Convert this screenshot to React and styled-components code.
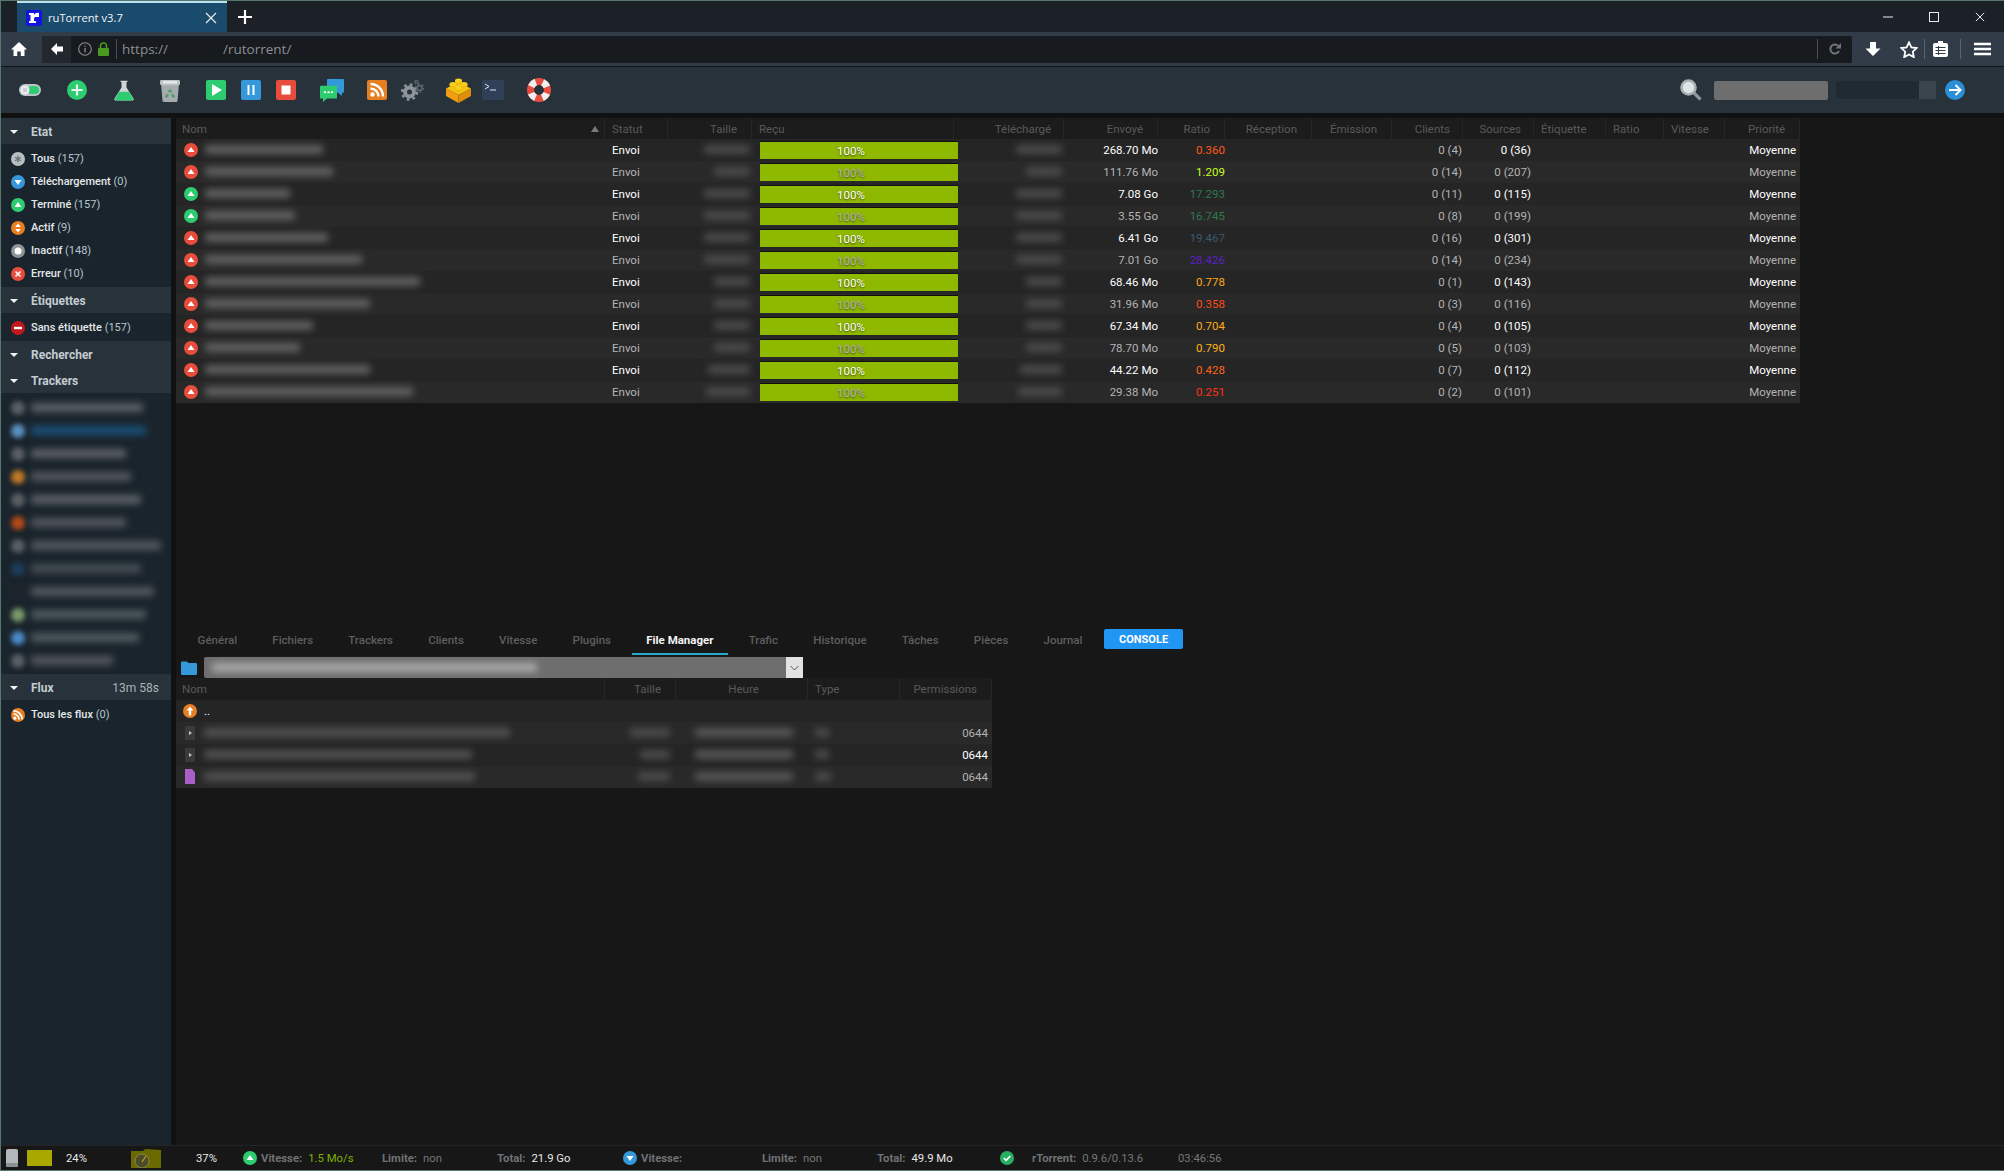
import styled, { createGlobalStyle } from "styled-components";

const GlobalStyle = createGlobalStyle`
  html, body { margin: 0; padding: 0; background: #171717; }
  * { box-sizing: border-box; }
`;

const Window = styled.div`
  width: 2004px;
  height: 1171px;
  overflow: hidden;
  display: flex;
  flex-direction: column;
  border: 1px solid #56786c;
  border-right: 0;
  background: #171717;
  font-family: Roboto, "Liberation Sans", sans-serif;
`;

/* browser chrome */
const TabBar = styled.div`
  height: 31px;
  flex: none;
  display: flex;
  align-items: stretch;
  padding-left: 16px;
  background: #1b2127;
`;

const BrowserTab = styled.div`
  width: 210px;
  display: flex;
  align-items: center;
  padding: 0 10px 0 9px;
  background: #1a4a6c;
  border-top: 2px solid #b9e3ee;
  color: #f2f5f7;
  font: 11.2px "Open Sans", "Liberation Sans", sans-serif;
`;

const TabTitle = styled.span`
  margin-left: 6px;
  flex: 1;
`;

const NewTab = styled.div`
  display: flex;
  align-items: center;
  margin-left: 11px;
`;

const WindowButtons = styled.div`
  margin-left: auto;
  display: flex;
  align-items: center;
  padding-right: 19px;
  gap: 36px;
`;

const NavBar = styled.div`
  height: 35px;
  flex: none;
  display: flex;
  align-items: center;
  padding-left: 10px;
  background: #323c48;
  border-bottom: 1px solid #12161a;
`;

const UrlBox = styled.div`
  margin-left: 15px;
  width: 1810px;
  height: 27px;
  display: flex;
  align-items: center;
  background: #171a1e;
  border-radius: 2px;
  color: #8b8f93;
  font: 13.5px "Open Sans", "Liberation Sans", sans-serif;
`;

const BackButton = styled.div`
  width: 29px;
  height: 100%;
  display: flex;
  align-items: center;
  justify-content: center;
  background: #22282e;
`;

const UrlSeparator = styled.div`
  width: 1px;
  height: 20px;
  margin: ${(p) => p.$margin};
  background: ${(p) => p.$color || "#4a5058"};
`;

const UrlText = styled.span`
  margin-left: ${(p) => p.$left}px;
`;

const NavIcons = styled.div`
  display: flex;
  align-items: center;
  margin-left: 13px;
`;

const NavIcon = styled.span`
  display: flex;
  margin-left: ${(p) => p.$left || 0}px;
`;

/* ruTorrent toolbar */
const Toolbar = styled.div`
  height: 46px;
  flex: none;
  display: flex;
  align-items: center;
  padding-left: 18px;
  background: #27323a;
`;

const ToolIcon = styled.span`
  display: flex;
  margin-left: ${(p) => p.$left || 0}px;
`;

const SearchArea = styled.div`
  margin-left: auto;
  display: flex;
  align-items: center;
  padding-right: 39px;
`;

const SearchInput = styled.div`
  width: 114px;
  height: 19px;
  margin-left: 12px;
  background: #6e6e6e;
  border-radius: 2px;
`;

const SearchSelect = styled.div`
  width: 100px;
  height: 18px;
  margin: 0 9px 0 8px;
  display: flex;
  justify-content: flex-end;
  background: #202a32;
  border-radius: 2px;
`;

const SelectArrow = styled.div`
  width: 17px;
  background: #3b454d;
`;

/* page body */
const Body = styled.div`
  flex: 1;
  min-height: 0;
  display: flex;
  padding-top: 5px;
  background: #111;
`;

const Sidebar = styled.aside`
  width: 170px;
  flex: none;
  background: #1a242c;
`;

const PanelHeader = styled.div`
  height: 26px;
  display: flex;
  align-items: center;
  padding: 2px 12px 0 9px;
  background: #27323a;
  color: #c4ccd2;
  font-size: 12px;
  font-weight: 700;
`;

const Caret = styled.span`
  width: 0;
  height: 0;
  margin-right: 13px;
  border-left: 4px solid transparent;
  border-right: 4px solid transparent;
  border-top: 4px solid #f2f2f2;
`;

const HeaderExtra = styled.span`
  margin-left: auto;
  font-weight: 400;
  color: #aab2b8;
`;

const ItemList = styled.div`
  padding: 3px 0 2px;
`;

const SideItem = styled.div`
  height: 23px;
  display: flex;
  align-items: center;
  padding-left: 10px;
  gap: 6px;
  color: #e4e8ea;
  font-size: 11px;
  font-weight: 500;
`;

const Count = styled.span`
  color: #b4c4cf;
  font-weight: 400;
`;

const Blur = styled.span`
  display: inline-block;
  flex: none;
  width: ${(p) => p.$w}px;
  height: ${(p) => p.$h || 9}px;
  background: ${(p) => p.$color || "#606060"};
  border-radius: 2px;
  filter: blur(${(p) => p.$blur || 3.5}px);
`;

const BlurDot = styled(Blur)`
  height: 14px;
  border-radius: 50%;
`;

const Main = styled.main`
  flex: 1;
  min-width: 0;
  margin-left: 5px;
  display: flex;
  flex-direction: column;
  background: #171717;
`;

const TopPane = styled.div`
  height: 507px;
  flex: none;
`;

const TableRow = styled.div`
  display: grid;
  grid-template-columns: ${(p) => p.$cols};
  width: ${(p) => p.$width}px;
  height: ${(p) => p.$h || 22}px;
  background: ${(p) => (p.$odd ? "#252525" : "#292929")};
  color: ${(p) => (p.$odd ? "#fff" : "#b4b4b4")};
  font-size: 11.5px;
`;

const HeadRow = styled(TableRow)`
  background: #1c1c1c;
  color: #5a5a5a;
`;

const Cell = styled.div`
  display: flex;
  align-items: center;
  min-width: 0;
  white-space: nowrap;
  justify-content: ${(p) => (p.$align === "right" ? "flex-end" : p.$align === "center" ? "center" : "flex-start")};
  padding: 0 ${(p) => p.$pr ?? 3}px 1px ${(p) => p.$pl ?? 7}px;
  color: ${(p) => p.$color || "inherit"};
`;

const HeadCell = styled(Cell)`
  position: relative;
  padding-bottom: 0;
  border-right: 1px solid #262626;
`;

const SortMark = styled.span`
  position: absolute;
  right: 5px;
  top: 8px;
  border-left: 4px solid transparent;
  border-right: 4px solid transparent;
  border-bottom: 6px solid #7a7a7a;
`;

const ProgressBar = styled.div`
  flex: none;
  width: 198px;
  height: 18px;
  margin-top: 1px;
  display: flex;
  align-items: center;
  justify-content: center;
  padding-right: 16px;
  background: #8fb800;
  border-top: 1px solid #10120a;
  text-shadow: 0 1px 2px #3a4a00;
`;

const Tabs = styled.div`
  height: 30px;
  display: flex;
  padding-left: 7px;
  gap: 6px;
`;

const PanelTab = styled.div`
  padding: 1px 14.6px 0;
  display: flex;
  align-items: center;
  color: ${(p) => (p.$active ? "#f4f4f4" : "#5e5e5e")};
  font-size: 11.5px;
  font-weight: ${(p) => (p.$active ? 700 : 500)};
  border-bottom: 2px solid ${(p) => (p.$active ? "#2aa8c8" : "transparent")};
`;

const ConsoleTab = styled.div`
  width: 79px;
  height: 20px;
  margin: 4px 0 0 1px;
  display: flex;
  align-items: center;
  justify-content: center;
  background: #2196f3;
  border-radius: 2px;
  color: #fff;
  font-size: 11px;
  font-weight: 700;
`;

const PathRow = styled.div`
  height: 21px;
  margin-top: 2px;
  display: flex;
  align-items: center;
  padding-left: 5px;
`;

const PathSelect = styled.div`
  width: 599px;
  height: 21px;
  margin-left: 7px;
  display: flex;
  align-items: center;
  justify-content: space-between;
  padding-left: 8px;
  background: #6e6e6e;
  border-radius: 2px 0 0 2px;
`;

const PathArrow = styled.div`
  width: 17px;
  height: 100%;
  display: flex;
  align-items: center;
  justify-content: center;
  background: #e2e2e2;
`;

const FileName = styled.span`
  margin-left: 7px;
`;

const StatusBar = styled.footer`
  height: 25px;
  flex: none;
  display: flex;
  align-items: center;
  background: #171717;
  border-top: 1px solid #242424;
  color: #6e7275;
  font-size: 11.3px;
`;

const StatusSlot = styled.div`
  display: flex;
  align-items: center;
  flex: none;
  width: ${(p) => p.$w}px;
  padding-left: ${(p) => p.$pl || 0}px;
`;

const StatusLabel = styled.span`
  font-weight: 700;
  margin: 0 6px 0 ${(p) => p.$left || 0}px;
`;

const StatusValue = styled.span`
  color: ${(p) => p.$color || "#74787b"};
`;

const LoadBox = styled.div`
  width: 25px;
  height: 16px;
  margin-left: 9px;
  background: #a8a800;
`;

/* drawings */
const Dot = ({ color, children, size = 14 }) => (
  <svg width={size} height={size} viewBox="0 0 14 14" style={{ flex: "none" }}>
    <circle cx="7" cy="7" r="7" fill={color} />
    {children}
  </svg>
);
const Up = () => <path d="M7 4 L10.5 9 H3.5 Z" fill="#fff" />;
const Down = () => <path d="M7 10 L3.5 5 H10.5 Z" fill="#fff" />;

const Favicon = () => (
  <svg width="16" height="16" viewBox="0 0 16 16">
    <rect width="16" height="16" rx="2" fill="#1414e0" />
    <path d="M3 3h5v2c1-2 3-2.500 5-2v4h-3c-1 0-2 .5-2 2v2h2v2H3v-2h1.500V5H3z" fill="#fff" />
  </svg>
);
const CloseX = ({ size = 12, color = "#e8ecef" }) => (
  <svg width={size} height={size} viewBox="0 0 12 12">
    <path d="M1 1 L11 11 M11 1 L1 11" stroke={color} strokeWidth="1.200" />
  </svg>
);
const PlusIcon = () => (
  <svg width="14" height="14" viewBox="0 0 14 14">
    <path d="M7 0v14M0 7h14" stroke="#fff" strokeWidth="2.200" />
  </svg>
);
const HomeIcon = () => (
  <svg width="16" height="16" viewBox="0 0 16 16">
    <path d="M8 1 L16 8.500 H13.500 V15 H9.800 V10.500 H6.200 V15 H2.500 V8.500 H0 Z" fill="#fff" />
  </svg>
);
const BackIcon = () => (
  <svg width="14" height="14" viewBox="0 0 14 14">
    <path d="M7 1 L1 7 L7 13 V9.500 H13 V4.500 H7 Z" fill="#fff" />
  </svg>
);
const InfoIcon = () => (
  <svg width="14" height="14" viewBox="0 0 14 14">
    <circle cx="7" cy="7" r="6.300" fill="none" stroke="#8b8f93" strokeWidth="1.100" />
    <path d="M7 6v4.500M7 3.500v1.300" stroke="#8b8f93" strokeWidth="1.300" />
  </svg>
);
const LockIcon = () => (
  <svg width="11" height="14" viewBox="0 0 11 14">
    <path d="M2.500 6V4a3 3 0 0 1 6 0v2" fill="none" stroke="#4a9a20" strokeWidth="1.600" />
    <rect y="6" width="11" height="8" rx="1" fill="#4a9a20" />
  </svg>
);
const ReloadIcon = () => (
  <svg width="14" height="14" viewBox="0 0 14 14">
    <path d="M11 9a4.500 4.500 0 1 1-.8-5" fill="none" stroke="#6f757b" strokeWidth="2" />
    <path d="M13 1v5.500H7.500z" fill="#6f757b" />
  </svg>
);
const DownloadIcon = () => (
  <svg width="16" height="16" viewBox="0 0 16 16">
    <path d="M5 1h6v6.500h4.500L8 15 .5 7.500H5z" fill="#fff" />
  </svg>
);
const StarIcon = () => (
  <svg width="18" height="17" viewBox="0 0 18 17">
    <path d="M9 1.300l2.400 5 5.400.7-4 3.700 1 5.400L9 13.500l-4.800 2.600 1-5.400-4-3.700 5.400-.7z" fill="none" stroke="#fff" strokeWidth="1.800" />
  </svg>
);
const ClipboardIcon = () => (
  <svg width="15" height="16" viewBox="0 0 15 16">
    <rect y="2" width="15" height="14" rx="2" fill="#fff" />
    <rect x="5" width="5" height="4" fill="#fff" />
    <path d="M2.500 6.500h10M2.500 9.500h10M2.500 12.500h10M5.500 5v9" stroke="#323c48" strokeWidth="1" />
  </svg>
);
const MenuIcon = () => (
  <svg width="17" height="14" viewBox="0 0 17 14">
    <path d="M0 2h17M0 7h17M0 12h17" stroke="#fff" strokeWidth="2.600" />
  </svg>
);
const SwitchIcon = () => (
  <svg width="22" height="12" viewBox="0 0 22 12">
    <rect width="22" height="12" rx="6" fill="#bcc3c7" />
    <rect x="9" y="2" width="11" height="8" rx="4" fill="#2ecc71" />
    <circle cx="6" cy="6" r="4.500" fill="#e8ecee" />
    <path d="M5 4v4M7 4v4" stroke="#9aa3a8" strokeWidth="0.800" />
  </svg>
);
const AddIcon = () => (
  <svg width="20" height="20" viewBox="0 0 20 20">
    <circle cx="10" cy="10" r="10" fill="#2ecc71" />
    <path d="M10 4.500v11M4.500 10h11" stroke="#ecf7ef" strokeWidth="2.200" />
  </svg>
);
const FlaskIcon = () => (
  <svg width="20" height="21" viewBox="0 0 20 25" preserveAspectRatio="none">
    <path d="M6.500 1h7v1.500h-1V9l7 13c.6 1.200-.2 2.500-1.500 2.500H2c-1.300 0-2.100-1.300-1.500-2.500l7-13V2.500h-1z" fill="#d0d5d8" />
    <path d="M5 14h10l4 8.500c0 1-.5 2-1.500 2h-15c-1 0-1.500-1-1.500-2z" fill="#2ecc71" />
  </svg>
);
const TrashIcon = () => (
  <svg width="20" height="23" viewBox="0 0 20 26" preserveAspectRatio="none">
    <path d="M1 5h18l-1.500 19.500a1.500 1.500 0 0 1-1.500 1.500H4a1.500 1.500 0 0 1-1.500-1.500z" fill="#a4acae" />
    <rect y="1" width="20" height="6" rx="1.500" fill="#bcc3c5" />
    <path d="M3 2.500h14v2.500H3z" fill="#e8ecee" />
    <path d="M10 11l2.500 4h-5zM6 17l3 .5-1.500 3.500H5zM14 17l-3 .5 1.500 3.500H15z" fill="#4c9c6c" />
  </svg>
);
const SquareBtn = ({ color, children }) => (
  <svg width="20" height="20" viewBox="0 0 20 20">
    <rect width="20" height="20" rx="2" fill={color} />
    {children}
  </svg>
);
const ChatIcon = () => (
  <svg width="24" height="23" viewBox="0 0 24 27" preserveAspectRatio="none">
    <path d="M7 1a1 1 0 0 1 1-1h15a1 1 0 0 1 1 1v14a1 1 0 0 1-1 1h-1v4l-4-4H8a1 1 0 0 1-1-1z" fill="#3498db" />
    <path d="M0 9a1 1 0 0 1 1-1h15a1 1 0 0 1 1 1v13a1 1 0 0 1-1 1H7l-4 4v-4H1a1 1 0 0 1-1-1z" fill="#2ecc71" />
    <circle cx="5" cy="15.500" r="1.200" fill="#fff" />
    <circle cx="8.500" cy="15.500" r="1.200" fill="#fff" />
    <circle cx="12" cy="15.500" r="1.200" fill="#fff" />
  </svg>
);
const RssIcon = ({ size = 20, round }) => (
  <svg width={size} height={size} viewBox="0 0 20 20" style={{ flex: "none" }}>
    <rect width="20" height="20" rx={round ? 10 : 2} fill="#e67e22" />
    <circle cx="5.500" cy="14.500" r="2.200" fill="#fff" />
    <path d="M3.500 8.500a8 8 0 0 1 8 8M3.500 4a12.500 12.500 0 0 1 12.500 12.500" fill="none" stroke="#fff" strokeWidth="2.400" />
  </svg>
);
const GearsIcon = () => (
  <svg width="24" height="22" viewBox="0 0 24 22">
    <circle cx="8.500" cy="13" r="4.500" fill="none" stroke="#8d9599" strokeWidth="4" />
    <circle cx="8.500" cy="13" r="7.500" fill="none" stroke="#8d9599" strokeWidth="2.500" strokeDasharray="2.700 3.190" />
    <circle cx="18.500" cy="9" r="2.500" fill="none" stroke="#5c6468" strokeWidth="1.800" />
    <circle cx="18.500" cy="9" r="4" fill="none" stroke="#5c6468" strokeWidth="1.400" strokeDasharray="1.800 2.390" />
    <circle cx="15.500" cy="3" r="1.600" fill="none" stroke="#5c6468" strokeWidth="1.500" />
  </svg>
);
const LegoIcon = () => (
  <svg width="25" height="25" viewBox="0 0 25 25">
    <path d="M12.500 4 L25 10.500 L12.500 17 L0 10.500 Z" fill="#f1c40f" />
    <path d="M0 10.500 L12.500 17 V25 L0 18 Z" fill="#f39c12" />
    <path d="M25 10.500 L12.500 17 V25 L25 18 Z" fill="#e08e0b" />
    <ellipse cx="12.500" cy="3.500" rx="3.500" ry="2.300" fill="#f5a800" />
    <ellipse cx="7" cy="7" rx="3.500" ry="2.300" fill="#f5a800" />
    <ellipse cx="18" cy="7" rx="3.500" ry="2.300" fill="#f5a800" />
    <ellipse cx="12.500" cy="10.500" rx="3.500" ry="2.300" fill="#f5a800" />
    <ellipse cx="12.500" cy="2.800" rx="3.500" ry="2.300" fill="#f5d020" />
    <ellipse cx="7" cy="6.300" rx="3.500" ry="2.300" fill="#f5d020" />
    <ellipse cx="18" cy="6.300" rx="3.500" ry="2.300" fill="#f5d020" />
    <ellipse cx="12.500" cy="9.800" rx="3.500" ry="2.300" fill="#f5d020" />
  </svg>
);
const TerminalIcon = () => (
  <svg width="22" height="20" viewBox="0 0 22 20">
    <rect width="22" height="20" rx="2" fill="#2f4058" />
    <path d="M3 4l4 2.500-4 2.500" fill="none" stroke="#dfe6ea" strokeWidth="1" />
    <path d="M8 10h6" stroke="#dfe6ea" strokeWidth="1" />
  </svg>
);
const BuoyIcon = () => (
  <svg width="24" height="24" viewBox="0 0 24 24">
    <circle cx="12" cy="12" r="8.500" fill="none" stroke="#e74c3c" strokeWidth="7" />
    <circle cx="12" cy="12" r="8.500" fill="none" stroke="#ecf0f1" strokeWidth="7" strokeDasharray="6.350 7" strokeDashoffset="-3.500" />
  </svg>
);
const SearchIcon = () => (
  <svg width="22" height="22" viewBox="0 0 22 22">
    <path d="M13 13l7.500 7.500" stroke="#8d9599" strokeWidth="3.200" />
    <circle cx="8.500" cy="8.500" r="7" fill="#dfe5e6" stroke="#a7afb1" strokeWidth="2.600" />
  </svg>
);
const GoIcon = () => (
  <svg width="20" height="20" viewBox="0 0 20 20">
    <circle cx="10" cy="10" r="10" fill="#2b8fd8" />
    <path d="M4 10h11M10.500 5l5 5-5 5" fill="none" stroke="#fff" strokeWidth="2" />
  </svg>
);
const FolderIcon = () => (
  <svg width="16" height="14" viewBox="0 0 16 14">
    <path d="M0 1.500A1 1 0 0 1 1 .5h5l1.500 1.500H15a1 1 0 0 1 1 1V13a1 1 0 0 1-1 1H1a1 1 0 0 1-1-1z" fill="#3498db" />
  </svg>
);
const ChevronIcon = ({ color = "#555" }) => (
  <svg width="9" height="6" viewBox="0 0 9 6">
    <path d="M.5 1l4 4 4-4" fill="none" stroke={color} strokeWidth="1" />
  </svg>
);
const ParentIcon = () => (
  <svg width="14" height="14" viewBox="0 0 14 14" style={{ flex: "none" }}>
    <circle cx="7" cy="7" r="7" fill="#e67e22" />
    <path d="M7 2.500L10.500 6.500H8.200V11.500H5.800V6.500H3.500z" fill="#fff" />
  </svg>
);
const VideoIcon = () => (
  <svg width="14" height="14" viewBox="0 0 14 14" style={{ flex: "none" }}>
    <rect x="2" width="10" height="14" fill="#3a3a3a" />
    <path d="M6 5l3 2-3 2z" fill="#c8c8c8" />
  </svg>
);
const FileIcon = () => (
  <svg width="14" height="15" viewBox="0 0 14 15" style={{ flex: "none" }}>
    <path d="M2 0h7l3 3.500V15H2z" fill="#a85fc8" />
  </svg>
);
const DiskIcon = () => (
  <svg width="12" height="18" viewBox="0 0 12 18">
    <rect width="12" height="18" rx="2" fill="#b4b8ba" />
    <rect y="14" width="12" height="4" rx="1" fill="#8b9092" />
  </svg>
);
const GaugeIcon = () => (
  <svg width="30" height="19" viewBox="0 0 30 19">
    <path d="M0 2h12l2-2 16 1v18H0z" fill="#6a6a00" />
    <circle cx="11" cy="12" r="7" fill="#4c4c28" stroke="#8a8a50" strokeWidth="1" />
    <path d="M11 13l4-6" stroke="#c8a020" strokeWidth="1.200" />
  </svg>
);

/* data */
const mainCols = "429px 63px 84px 202px 110px 94px 67px 87px 80px 71px 71px 72px 58px 61px 75px";
const mainHead = [
  ["Nom", "left", 6], ["Statut", "left", 7], ["Taille", "right"], ["Reçu", "left", 7], ["Téléchargé", "right"],
  ["Envoyé", "right"], ["Ratio", "right"], ["Réception", "right"], ["Émission", "right"], ["Clients", "right"],
  ["Sources", "right"], ["Étiquette", "left", 7], ["Ratio", "left", 7], ["Vitesse", "left", 7], ["Priorité", "right"],
];
const torrents = [
  { dot: "#e74c3c", name: 118, size: 46, dl: 46, sent: "268.70 Mo", ratio: "0.360", color: "#ff5a14", clients: "0 (4)", sources: "0 (36)" },
  { dot: "#e74c3c", name: 128, size: 36, dl: 36, sent: "111.76 Mo", ratio: "1.209", color: "#c8ff1e", clients: "0 (14)", sources: "0 (207)" },
  { dot: "#2ecc71", name: 85, size: 46, dl: 46, sent: "7.08 Go", ratio: "17.293", color: "#2f7a50", clients: "0 (11)", sources: "0 (115)" },
  { dot: "#2ecc71", name: 90, size: 46, dl: 46, sent: "3.55 Go", ratio: "16.745", color: "#2f7a50", clients: "0 (8)", sources: "0 (199)" },
  { dot: "#e74c3c", name: 123, size: 46, dl: 46, sent: "6.41 Go", ratio: "19.467", color: "#3a5a6e", clients: "0 (16)", sources: "0 (301)" },
  { dot: "#e74c3c", name: 157, size: 46, dl: 46, sent: "7.01 Go", ratio: "28.426", color: "#5a1fc8", clients: "0 (14)", sources: "0 (234)" },
  { dot: "#e74c3c", name: 215, size: 36, dl: 36, sent: "68.46 Mo", ratio: "0.778", color: "#ffaa14", clients: "0 (1)", sources: "0 (143)" },
  { dot: "#e74c3c", name: 165, size: 36, dl: 36, sent: "31.96 Mo", ratio: "0.358", color: "#ff4a14", clients: "0 (3)", sources: "0 (116)" },
  { dot: "#e74c3c", name: 108, size: 36, dl: 36, sent: "67.34 Mo", ratio: "0.704", color: "#ffaa14", clients: "0 (4)", sources: "0 (105)" },
  { dot: "#e74c3c", name: 95, size: 36, dl: 36, sent: "78.70 Mo", ratio: "0.790", color: "#ffb414", clients: "0 (5)", sources: "0 (103)" },
  { dot: "#e74c3c", name: 165, size: 42, dl: 42, sent: "44.22 Mo", ratio: "0.428", color: "#ff6414", clients: "0 (7)", sources: "0 (112)" },
  { dot: "#e74c3c", name: 208, size: 44, dl: 44, sent: "29.38 Mo", ratio: "0.251", color: "#ff3214", clients: "0 (2)", sources: "0 (101)" },
];
const states = [
  ["Tous", "(157)", "#b8bfc3", <path key="a" d="M7 3.500v7M4 5.200l6 3.600M10 5.200l-6 3.600" stroke="#6a7276" strokeWidth="1.300" />],
  ["Téléchargement", "(0)", "#3498db", <Down key="b" />],
  ["Terminé", "(157)", "#2ecc71", <Up key="c" />],
  ["Actif", "(9)", "#e67e22", <path key="d" d="M7 2.500l2.800 3.500H4.200zM7 11.500l2.800-3.500H4.200z" fill="#fff" />],
  ["Inactif", "(148)", "#8d9599", <circle key="e" cx="7" cy="7" r="3.500" fill="#fff" />],
  ["Erreur", "(10)", "#e74c3c", <path key="f" d="M4.500 4.500l5 5M9.500 4.500l-5 5" stroke="#fff" strokeWidth="1.600" />],
];
const trackers = [
  [112, "#5c6165", "#5a5f63"], [115, "#1a5078", "#5a90c0"], [95, "#5c6165", "#5a5f63"], [100, "#54595d", "#c07a28"],
  [110, "#5c6165", "#5a5f63"], [95, "#54595d", "#b04a18"], [130, "#54595d", "#5a5f63"], [110, "#464e54", "#1c3c58"],
  [123, "#54595d", "#1e262c"], [115, "#505a5e", "#7a9a6a"], [108, "#505a5e", "#4a8ac8"], [82, "#54595d", "#5a5f63"],
];
const panelTabs = ["Général", "Fichiers", "Trackers", "Clients", "Vitesse", "Plugins", "File Manager", "Trafic", "Historique", "Tâches", "Pièces", "Journal"];
const fileCols = "429px 71px 132px 92px 92px";
const files = [
  { icon: <VideoIcon />, name: 306, size: 40, time: 98, type: 14 },
  { icon: <VideoIcon />, name: 268, size: 30, time: 98, type: 14 },
  { icon: <FileIcon />, name: 271, size: 32, time: 98, type: 16 },
];

export default function App() {
  return (
    <>
      <GlobalStyle />
      <Window>
        <TabBar>
          <BrowserTab>
            <Favicon />
            <TabTitle>ruTorrent v3.7</TabTitle>
            <CloseX />
          </BrowserTab>
          <NewTab><PlusIcon /></NewTab>
          <WindowButtons>
            <svg width="10" height="10" viewBox="0 0 10 10"><path d="M0 5h10" stroke="#e8ecef" /></svg>
            <svg width="10" height="10" viewBox="0 0 10 10"><rect x=".5" y=".5" width="9" height="9" fill="none" stroke="#e8ecef" /></svg>
            <CloseX size={10} />
          </WindowButtons>
        </TabBar>

        <NavBar>
          <HomeIcon />
          <UrlBox>
            <BackButton><BackIcon /></BackButton>
            <NavIcon $left={7}><InfoIcon /></NavIcon>
            <NavIcon $left={6}><LockIcon /></NavIcon>
            <UrlSeparator $margin="0 5px 0 7px" />
            <UrlText>https://</UrlText>
            <UrlText $left={55}>/rutorrent/</UrlText>
            <UrlSeparator $margin="0 10px 0 auto" />
            <ReloadIcon />
            <NavIcon $left={10} />
          </UrlBox>
          <NavIcons>
            <DownloadIcon />
            <NavIcon $left={19}><StarIcon /></NavIcon>
            <UrlSeparator $margin="0 8px 0 6px" $color="#5a646e" />
            <ClipboardIcon />
            <UrlSeparator $margin="0 13px 0 12px" $color="#5a646e" />
            <MenuIcon />
          </NavIcons>
        </NavBar>

        <Toolbar>
          <ToolIcon><SwitchIcon /></ToolIcon>
          <ToolIcon $left={26}><AddIcon /></ToolIcon>
          <ToolIcon $left={27}><FlaskIcon /></ToolIcon>
          <ToolIcon $left={26}><TrashIcon /></ToolIcon>
          <ToolIcon $left={26}>
            <SquareBtn color="#2ecc71"><path d="M6 4l10 6-10 6z" fill="#fff" /></SquareBtn>
          </ToolIcon>
          <ToolIcon $left={15}>
            <SquareBtn color="#3498db"><path d="M7.500 5v10M12.500 5v10" stroke="#fff" strokeWidth="2" /></SquareBtn>
          </ToolIcon>
          <ToolIcon $left={15}>
            <SquareBtn color="#e74c3c"><rect x="5.500" y="5.500" width="9" height="9" fill="#fff" /></SquareBtn>
          </ToolIcon>
          <ToolIcon $left={24}><ChatIcon /></ToolIcon>
          <ToolIcon $left={23}><RssIcon /></ToolIcon>
          <ToolIcon $left={14}><GearsIcon /></ToolIcon>
          <ToolIcon $left={21}><LegoIcon /></ToolIcon>
          <ToolIcon $left={11}><TerminalIcon /></ToolIcon>
          <ToolIcon $left={23}><BuoyIcon /></ToolIcon>
          <SearchArea>
            <SearchIcon />
            <SearchInput />
            <SearchSelect><SelectArrow /></SearchSelect>
            <GoIcon />
          </SearchArea>
        </Toolbar>

        <Body>
          <Sidebar>
            <PanelHeader><Caret />Etat</PanelHeader>
            <ItemList>
              {states.map(([label, count, color, glyph]) => (
                <SideItem key={label}>
                  <Dot color={color}>{glyph}</Dot>
                  <span>{label} <Count>{count}</Count></span>
                </SideItem>
              ))}
            </ItemList>
            <PanelHeader><Caret />Étiquettes</PanelHeader>
            <ItemList>
              <SideItem>
                <Dot color="#c0181c"><rect x="3" y="5.800" width="8" height="2.400" fill="#fff" /></Dot>
                <span>Sans étiquette <Count>(157)</Count></span>
              </SideItem>
            </ItemList>
            <PanelHeader><Caret />Rechercher</PanelHeader>
            <PanelHeader><Caret />Trackers</PanelHeader>
            <ItemList>
              {trackers.map(([w, bar, dot], i) => (
                <SideItem key={i}>
                  <BlurDot $w={14} $color={dot} $blur={2.5} />
                  <Blur $w={w} $color={bar} />
                </SideItem>
              ))}
            </ItemList>
            <PanelHeader><Caret />Flux<HeaderExtra>13m 58s</HeaderExtra></PanelHeader>
            <ItemList>
              <SideItem>
                <RssIcon size={14} round />
                <span>Tous les flux <Count>(0)</Count></span>
              </SideItem>
            </ItemList>
          </Sidebar>

          <Main>
            <TopPane>
              <HeadRow $cols={mainCols} $width={1624} $h={21}>
                {mainHead.map(([label, align, left], i) => (
                  <HeadCell key={i} $align={align} $pl={left} $pr={i === 4 || i === 9 || i === 10 ? 12 : 14}>
                    {label}
                    {i === 0 && <SortMark />}
                  </HeadCell>
                ))}
              </HeadRow>
              {torrents.map((t, i) => (
                <TableRow key={i} $cols={mainCols} $width={1624} $odd={i % 2 === 0}>
                  <Cell $pl={8}>
                    <Dot color={t.dot}><Up /></Dot>
                    <FileName><Blur $w={t.name} /></FileName>
                  </Cell>
                  <Cell>Envoi</Cell>
                  <Cell $align="right" $pr={2}><Blur $w={t.size} $color="#4a4a4a" /></Cell>
                  <Cell $pl={8} $pr={0}><ProgressBar>100%</ProgressBar></Cell>
                  <Cell $align="right" $pr={2}><Blur $w={t.dl} $color="#4a4a4a" /></Cell>
                  <Cell $align="right" $pr={0}>{t.sent}</Cell>
                  <Cell $align="right" $pr={0} $color={t.color}>{t.ratio}</Cell>
                  <Cell />
                  <Cell />
                  <Cell $align="right" $pr={1} $color="#b4b4b4">{t.clients}</Cell>
                  <Cell $align="right" $pr={3}>{t.sources}</Cell>
                  <Cell />
                  <Cell />
                  <Cell />
                  <Cell $align="right" $pr={4}>Moyenne</Cell>
                </TableRow>
              ))}
            </TopPane>

            <Tabs>
              {panelTabs.map((tab) => (
                <PanelTab key={tab} $active={tab === "File Manager"}>{tab}</PanelTab>
              ))}
              <ConsoleTab>CONSOLE</ConsoleTab>
            </Tabs>

            <PathRow>
              <FolderIcon />
              <PathSelect>
                <Blur $w={325} $h={9} $color="#a8a8a8" />
                <PathArrow><ChevronIcon /></PathArrow>
              </PathSelect>
            </PathRow>

            <HeadRow $cols={fileCols} $width={816}>
              <HeadCell $pl={6}>Nom</HeadCell>
              <HeadCell $align="right" $pr={14}>Taille</HeadCell>
              <HeadCell $align="center">Heure</HeadCell>
              <HeadCell>Type</HeadCell>
              <HeadCell $align="right" $pr={14}>Permissions</HeadCell>
            </HeadRow>
            <TableRow $cols={fileCols} $width={816} $odd>
              <Cell $pl={7}><ParentIcon /><FileName>..</FileName></Cell>
              <Cell /><Cell /><Cell /><Cell />
            </TableRow>
            {files.map((f, i) => (
              <TableRow key={i} $cols={fileCols} $width={816} $odd={i % 2 === 1}>
                <Cell $pl={7}>{f.icon}<FileName><Blur $w={f.name} $color="#505050" /></FileName></Cell>
                <Cell $align="right" $pr={6}><Blur $w={f.size} $color="#4a4a4a" /></Cell>
                <Cell $align="center"><Blur $w={f.time} $color="#555" /></Cell>
                <Cell><Blur $w={f.type} $color="#4a4a4a" /></Cell>
                <Cell $align="right" $pr={4}>0644</Cell>
              </TableRow>
            ))}
          </Main>
        </Body>

        <StatusBar>
          <StatusSlot $w={65} $pl={5}>
            <DiskIcon /><LoadBox />
          </StatusSlot>
          <StatusSlot $w={65}><StatusValue $color="#e8e8e8">24%</StatusValue></StatusSlot>
          <StatusSlot $w={65}><GaugeIcon /></StatusSlot>
          <StatusSlot $w={47}><StatusValue $color="#e8e8e8">37%</StatusValue></StatusSlot>
          <StatusSlot $w={139}>
            <Dot color="#2ecc71"><Up /></Dot>
            <StatusLabel $left={4}>Vitesse:</StatusLabel>
            <StatusValue $color="#7fb000">1.5 Mo/s</StatusValue>
          </StatusSlot>
          <StatusSlot $w={115}><StatusLabel>Limite:</StatusLabel><StatusValue>non</StatusValue></StatusSlot>
          <StatusSlot $w={126}><StatusLabel>Total:</StatusLabel><StatusValue $color="#e8e8e8">21.9 Go</StatusValue></StatusSlot>
          <StatusSlot $w={139}>
            <Dot color="#3498db"><Down /></Dot>
            <StatusLabel $left={4}>Vitesse:</StatusLabel>
          </StatusSlot>
          <StatusSlot $w={115}><StatusLabel>Limite:</StatusLabel><StatusValue>non</StatusValue></StatusSlot>
          <StatusSlot $w={123}><StatusLabel>Total:</StatusLabel><StatusValue $color="#e8e8e8">49.9 Mo</StatusValue></StatusSlot>
          <StatusSlot $w={32}>
            <Dot color="#27ae60"><path d="M3.800 7l2.300 2.300 4.200-4.300" fill="none" stroke="#fff" strokeWidth="1.700" /></Dot>
          </StatusSlot>
          <StatusSlot $w={146}><StatusLabel>rTorrent:</StatusLabel><StatusValue>0.9.6/0.13.6</StatusValue></StatusSlot>
          <StatusSlot $w={60}><StatusValue>03:46:56</StatusValue></StatusSlot>
        </StatusBar>
      </Window>
    </>
  );
}
